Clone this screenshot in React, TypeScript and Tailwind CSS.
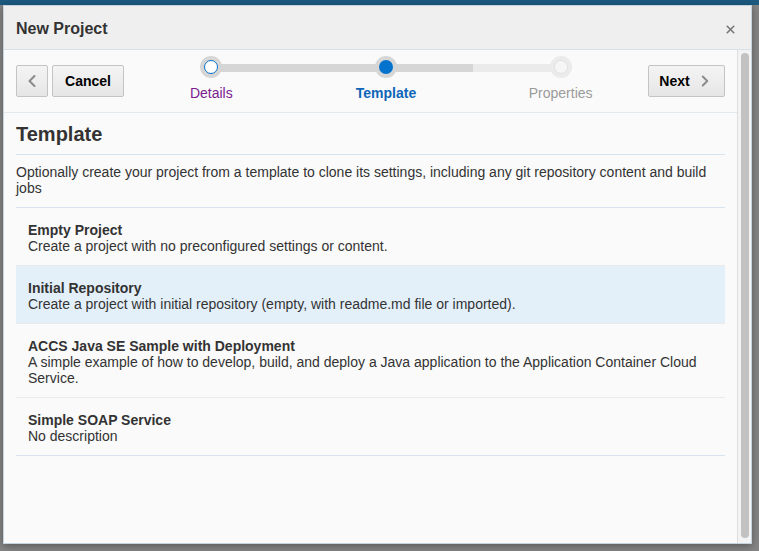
import { X, ChevronLeft, ChevronRight } from "lucide-react";

const templates = [
  {
    name: "Empty Project",
    desc: "Create a project with no preconfigured settings or content.",
  },
  {
    name: "Initial Repository",
    desc: "Create a project with initial repository (empty, with readme.md file or imported).",
    selected: true,
  },
  {
    name: "ACCS Java SE Sample with Deployment",
    desc: "A simple example of how to develop, build, and deploy a Java application to the Application Container Cloud Service.",
  },
  {
    name: "Simple SOAP Service",
    desc: "No description",
  },
];

function Train() {
  return (
    <div className="relative flex-1 self-start pt-[6px]">
      {/* bar behind the stops */}
      <div className="absolute left-[16.67%] right-[16.67%] top-[14px] h-[8px] bg-[#ebebeb]">
        <div className="h-full w-[75%] bg-[#d6d6d6]" />
      </div>
      <div className="relative grid grid-cols-3">
        <div className="flex flex-col items-center">
          <div className="flex h-[22px] w-[22px] items-center justify-center rounded-full bg-[#d6d6d6]">
            <div className="h-[14px] w-[14px] rounded-full border border-[#0572ce] bg-white" />
          </div>
          <span className="mt-[7px] text-[14px] leading-4 text-[#7b1c8f]">Details</span>
        </div>
        <div className="flex flex-col items-center">
          <div className="flex h-[22px] w-[22px] items-center justify-center rounded-full bg-[#d6d6d6]">
            <div className="h-[14px] w-[14px] rounded-full bg-[#0572ce]" />
          </div>
          <span className="mt-[7px] text-[14px] font-bold leading-4 text-[#0e66b8]">Template</span>
        </div>
        <div className="flex flex-col items-center">
          <div className="flex h-[22px] w-[22px] items-center justify-center rounded-full bg-[#ebebeb]">
            <div className="h-[14px] w-[14px] rounded-full border border-[#e2e2e2] bg-[#f6f6f6]" />
          </div>
          <span className="mt-[7px] text-[14px] leading-4 text-[#9b9b9b]">Properties</span>
        </div>
      </div>
    </div>
  );
}

export default function App() {
  return (
    <div
      className="h-[551px] w-[759px] overflow-hidden bg-[linear-gradient(to_bottom,#1c5a80_5px,#858585_5px)] pl-[3px] pt-[5px] text-[#333]"
      style={{ fontFamily: '"Liberation Sans", Arial, sans-serif' }}
    >
      <div className="flex h-[539px] w-[749px] flex-col border border-[#c5d3df] bg-[#fafafa] shadow-[0_2px_8px_rgba(0,0,0,0.35)]">
        {/* header */}
        <div className="flex h-[44px] shrink-0 items-center justify-between border-b border-[#d9e1e8] bg-[#efefef] pl-3 pr-[14px] pt-[2px]">
          <h1 className="text-[16px] font-bold">New Project</h1>
          <X className="mt-[1px] h-[13px] w-[13px] text-[#777]" strokeWidth={3} />
        </div>

        {/* body */}
        <div className="flex min-h-0 flex-1">
          <div className="flex-1">
            <div className="flex h-[63px] items-center border-b border-[#e3e8ec] px-3">
              <button className="flex h-[32px] w-[32px] items-center justify-center rounded-[2px] border border-[#c4c4c4] bg-[linear-gradient(#f4f4f4,#e6e6e6)]">
                <ChevronLeft className="h-[20px] w-[20px] text-[#8a8a8a]" strokeWidth={2.5} />
              </button>
              <button className="ml-[4px] h-[32px] w-[72px] rounded-[2px] border border-[#c4c4c4] bg-[linear-gradient(#f4f4f4,#e6e6e6)] text-[14px] font-bold text-black">
                Cancel
              </button>
              <Train />
              <button className="flex h-[32px] w-[77px] items-center justify-center gap-[6px] rounded-[2px] border border-[#c4c4c4] bg-[linear-gradient(#f4f4f4,#e6e6e6)] text-[14px] font-bold text-black">
                Next
                <ChevronRight className="h-[18px] w-[18px] text-[#8a8a8a]" strokeWidth={2.5} />
              </button>
            </div>

            <div className="px-3">
              <h2 className="border-b border-[#d7e3ee] pb-[8px] pt-[9px] text-[20px] font-bold leading-6">Template</h2>
              <p className="border-b border-[#d7e3ee] pb-[11px] pt-[9px] text-[14px] leading-4">
                Optionally create your project from a template to clone its settings, including any git repository
                content and build jobs
              </p>
              <ul className="border-b border-[#d7e3ee]">
                {templates.map((t, i) => (
                  <li
                    key={t.name}
                    className={
                      (t.selected ? "bg-[#e3f0fa] " : "") +
                      (i > 0 ? "border-t border-[#e8eaec] " : "") +
                      "px-3 pb-[11px] pt-[14px] text-[14px] leading-4"
                    }
                  >
                    <div className="font-bold">{t.name}</div>
                    <div>{t.desc}</div>
                  </li>
                ))}
              </ul>
            </div>
          </div>

          {/* scrollbar */}
          <div className="flex w-[14px] shrink-0 justify-center border-l border-[#dedede] bg-[#f3f3f3] pb-[5px] pt-[3px]">
            <div className="w-[8px] rounded-full bg-[#c2c2c2]" />
          </div>
        </div>
      </div>
    </div>
  );
}
